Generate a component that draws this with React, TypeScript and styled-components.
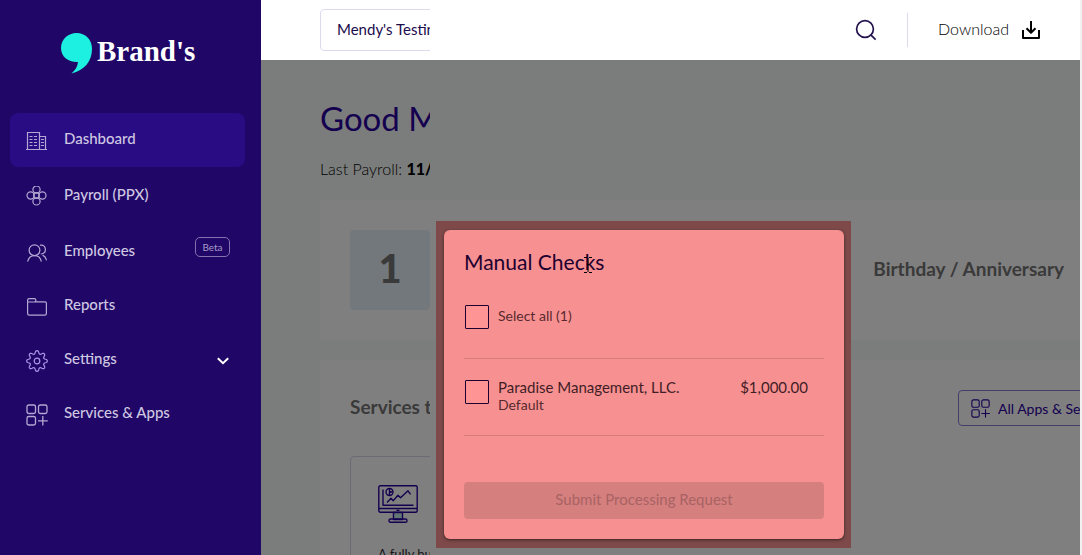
import React from "react";
import styled, { createGlobalStyle } from "styled-components";

const GlobalStyle = createGlobalStyle`
  *, *::before, *::after { box-sizing: border-box; }
  body {
    margin: 0;
    font-family: Lato, "Liberation Sans", sans-serif;
    font-size: 16px;
    background: #f1f1f1;
  }
  h1, h2, h3, p, ul { margin: 0; padding: 0; }
  ul { list-style: none; }
  button, select, input { font: inherit; }
`;

const Shell = styled.div`
  display: flex;
  height: 100vh;
  padding-right: 2px;
`;

const Sidebar = styled.aside`
  flex: 0 0 261px;
  padding: 32px 16px 0 10px;
  background: #200666;
`;

const Logo = styled.a`
  display: flex;
  align-items: flex-start;
  gap: 4px;
  height: 81px;
  padding-left: 51px;
  color: #fff;
  text-decoration: none;
`;

const LogoName = styled.span`
  font-family: "Liberation Serif", serif;
  font-size: 29px;
  font-weight: 700;
  line-height: 38px;
`;

const NavList = styled.ul<{ $gap: number }>`
  display: flex;
  flex-direction: column;
  gap: ${(p) => p.$gap}px;
`;

const NavLink = styled.a<{ $active?: boolean }>`
  display: flex;
  align-items: center;
  gap: 16px;
  height: 54px;
  padding: 2px 15px 0 16px;
  border-radius: 8px;
  background: ${(p) => (p.$active ? "#290b83" : "transparent")};
  color: #cfc8e2;
  text-decoration: none;
  svg { flex: none; }
`;

const NavLabel = styled.span`
  flex: 1;
  padding-bottom: 6px;
  font-size: 15px;
  font-weight: 500;
  line-height: 20px;
`;

const Beta = styled.span`
  align-self: flex-start;
  min-width: 35px;
  margin-top: 10px;
  border: 1px solid #8273b0;
  border-radius: 5px;
  color: #a79cc8;
  font-size: 10px;
  line-height: 18px;
  text-align: center;
`;

const Main = styled.main`
  flex: 1;
  min-width: 0;
  display: flex;
  flex-direction: column;
`;

const Header = styled.header`
  display: flex;
  align-items: center;
  justify-content: space-between;
  flex: 0 0 60px;
  padding: 0 39px 0 59px;
  background: #fff;
`;

const Clip = styled.div<{ $width: number }>`
  flex: none;
  width: ${(p) => p.$width}px;
  overflow: hidden;
  white-space: nowrap;
`;

const CompanySelect = styled.select`
  display: block;
  width: 220px;
  height: 42px;
  padding: 0 16px 2px;
  appearance: none;
  border: 1px solid #dedaee;
  border-radius: 4px;
  background: #fff;
  color: #1b0b4b;
  font-size: 15px;
`;

const Tools = styled.div`
  display: flex;
  align-items: center;
`;

const IconButton = styled.button`
  display: flex;
  align-items: center;
  gap: 12px;
  padding: 0;
  border: 0;
  background: none;
  color: #000;
`;

const ButtonText = styled.span`
  padding-bottom: 2px;
  font-size: 16px;
  font-weight: 300;
  line-height: 20px;
`;

const Separator = styled.span`
  width: 1px;
  height: 34px;
  margin: 0 30px;
  background: #dedaee;
`;

const Content = styled.div`
  position: relative;
  flex: 1;
  min-height: 0;
  overflow: hidden;
  display: flex;
  flex-direction: column;
  padding: 40px 0 0 59px;
  background: #f6faf8;
`;

const Greeting = styled.h1`
  color: #2a00a0;
  font-size: 33px;
  font-weight: 400;
  line-height: 36px;
`;

const LastPayroll = styled.p`
  margin: 23px 0 21px;
  color: #000;
  font-size: 16px;
  font-weight: 300;
  line-height: 20px;
  b { font-weight: 900; }
`;

const Card = styled.section`
  flex: none;
  margin-bottom: 20px;
  padding: 30px 0 30px 30px;
  background: #fff;
`;

const CardRow = styled.div`
  display: flex;
  align-items: center;
  justify-content: space-between;
`;

const CountTile = styled.div`
  width: 80px;
  height: 80px;
  border-radius: 4px;
  background: #e6f0f8;
  color: #747474;
  font-size: 40px;
  font-weight: 900;
  line-height: 76px;
  text-align: center;
`;

const CardTitle = styled.h2`
  padding: 0 16px 2px 0;
  color: #747474;
  font-size: 19px;
  font-weight: 700;
  line-height: 24px;
`;

const AppsButton = styled.button`
  display: flex;
  align-items: center;
  gap: 8px;
  height: 36px;
  padding: 0 12px;
  border: 1px solid #8b7ad0;
  border-radius: 4px;
  background: none;
  color: #2a00a0;
  font-size: 14px;
  white-space: nowrap;
`;

const ServiceTile = styled.article`
  width: 200px;
  margin-top: 30px;
  padding: 28px 27px 40px;
  border: 1px solid #d8d4ea;
  border-radius: 4px;
  color: #333;
  font-size: 13px;
  line-height: 20px;
  svg { display: block; margin-bottom: 21px; }
`;

const Backdrop = styled.div`
  position: absolute;
  inset: 0;
  background: rgba(0, 0, 0, 0.5);
`;

const Highlight = styled.div`
  position: absolute;
  top: 161px;
  left: 175px;
  padding: 9px 7px 9px 8px;
  background: #7d4949;
`;

const Modal = styled.section`
  position: relative;
  width: 400px;
  padding: 20px;
  border-radius: 6px;
  background: #f79191;
  box-shadow: 0 1px 3px rgba(0, 0, 0, 0.5);
  color: #57292f;
`;

const ModalTitle = styled.h2`
  color: #1e0030;
  font-size: 21px;
  font-weight: 400;
  line-height: 24px;
`;

const CheckRow = styled.div<{ $top: number; $bottom: number; $align: string }>`
  display: flex;
  align-items: ${(p) => p.$align};
  padding: ${(p) => p.$top}px 16px ${(p) => p.$bottom}px 1px;
  border-bottom: 1px solid #d57b7b;
`;

const CheckBox = styled.input`
  flex: none;
  appearance: none;
  width: 24px;
  height: 24px;
  margin: 2px 9px 0 0;
  border: 1px solid #1e0030;
  border-radius: 1px;
  background: #ff9494;
`;

const CheckLabel = styled.label`
  flex: 1;
  font-size: 14px;
  line-height: 18px;
`;

const Strong = styled.span`
  display: block;
  color: #421d26;
  font-size: 15px;
`;

const Amount = styled.span`
  color: #421d26;
  font-size: 15px;
  line-height: 18px;
`;

const Submit = styled.button`
  display: block;
  width: 100%;
  height: 37px;
  margin-top: 46px;
  padding: 0 0 4px;
  border: 0;
  border-radius: 4px;
  background: #d67f7f;
  color: #a86363;
  font-size: 15px;
`;

const TextCursor = styled.svg`
  position: absolute;
  top: 26px;
  left: 139px;
`;

const navStroke = { fill: "none", stroke: "#b3a8d3", strokeWidth: 1.2 } as const;

const BuildingIcon = () => (
  <svg width="22" height="20" viewBox="0 0 22 20" {...navStroke}>
    <path d="M1.500 18V1.500h12V18M13.500 5.500h6V18M0 18.500h21" />
    <path d="M3.500 5.500h3M8 5.500h3M3.500 8.500h3M8 8.500h3M3.500 11.500h3M8 11.500h3M3.500 14.500h3M8 14.500h3M15 8.500h3M15 11.500h3M15 14.500h3" />
  </svg>
);

const FlowerIcon = () => (
  <svg width="22" height="22" viewBox="0 1 22 22" {...navStroke}>
    <circle cx="10.500" cy="4.600" r="3.600" />
    <circle cx="4.600" cy="10.500" r="3.600" />
    <circle cx="16.400" cy="10.500" r="3.600" />
    <circle cx="10.500" cy="16.400" r="3.600" />
    <circle cx="10.500" cy="10.500" r="2.800" />
  </svg>
);

const PeopleIcon = () => (
  <svg width="22" height="20" viewBox="0 0 22 20" {...navStroke} strokeLinecap="round">
    <circle cx="8.500" cy="7.200" r="5.400" />
    <path d="M1.800 18.200c.8-3.600 3.200-5.600 6.700-5.600s6 2 6.700 5.600" />
    <path d="M14.400 2.200c3.200-.5 5 1.500 5 4.200 0 2.400-1.500 4.200-4.200 4.600M17 12.400c1.800.7 2.800 2.200 3.400 4.400" />
  </svg>
);

const FolderIcon = () => (
  <svg width="22" height="20" viewBox="0 0 22 20" {...navStroke}>
    <path d="M1.600 5V3.200c0-1 .6-1.600 1.600-1.600h5c1 0 1.700.6 1.700 1.600v.4c0 .8-.6 1.400-1.400 1.400H1.600v11.500c0 1 .7 1.700 1.700 1.700h15.400c1 0 1.700-.7 1.700-1.700V6.200c0-.8-.6-1.400-1.400-1.400H8.500" />
  </svg>
);

/* Outline of an eight-toothed cog with rounded teeth. */
const cogPoints = Array.from({ length: 96 }, (_, i) => {
  const angle = (i / 96) * Math.PI * 2;
  const wave = Math.cos(8 * angle);
  const radius = 8.8 + 1.5 * Math.sign(wave) * Math.pow(Math.abs(wave), 0.6);
  return `${(11 + radius * Math.sin(angle)).toFixed(2)},${(11 - radius * Math.cos(angle)).toFixed(2)}`;
}).join(" ");

const GearIcon = () => (
  <svg width="22" height="22" viewBox="0 0 22 22" {...navStroke} stroke="#ab96ea" strokeLinejoin="round">
    <polygon points={cogPoints} />
    <circle cx="11" cy="11" r="2.800" />
  </svg>
);

const AppsIcon = ({ size = 22, color = "#b3a8d3" }: { size?: number; color?: string }) => (
  <svg width={size} height={size} viewBox="0 0 22 22" fill="none" stroke={color} strokeWidth="1.300">
    <rect x="1" y="1" width="8.500" height="8.500" rx="1.800" />
    <rect x="12.500" y="1" width="8.500" height="8.500" rx="1.800" />
    <rect x="1" y="12.500" width="8.500" height="8.500" rx="1.800" />
    <path d="M16.800 12v9.500M12 16.800h9.800" />
  </svg>
);

const ChevronIcon = () => (
  <svg width="13" height="8" viewBox="0 0 13 8" fill="none" stroke="#fff" strokeWidth="2">
    <path d="M0.800 1.200L6 6.200l5.200-5" />
  </svg>
);

const CommaMark = () => (
  <svg width="32" height="42" viewBox="0 0 32 42" fill="#1df0e0">
    <path d="M15.500 1C24.500 1 31 7.500 31 17c0 12.500-7.500 21-20.500 24.500 4-3.500 6-7 6.500-11.500C7.500 30.500 0 25 0 16 0 7.500 7 1 15.500 1z" />
  </svg>
);

const SearchIcon = () => (
  <svg width="22" height="22" viewBox="0 0 22 22" fill="none" stroke="#24124f" strokeWidth="1.700">
    <circle cx="10" cy="10" r="8.400" />
    <path d="M15.800 15.800l4.800 4.800" />
  </svg>
);

const DownloadIcon = () => (
  <svg width="20" height="20" viewBox="0 0 20 20" fill="none" stroke="#000" strokeWidth="2" strokeLinejoin="round">
    <path d="M2 10v8h16v-8M10 1v11.500M5.500 8.200L10 12.700l4.500-4.500" />
  </svg>
);

const MonitorIcon = () => (
  <svg width="40" height="38" viewBox="0 0 40 38" fill="none" stroke="#2a00a0" strokeWidth="1.400" strokeLinejoin="round">
    <rect x="15.500" y="27.500" width="9" height="7" fill="#c4eee6" />
    <rect x="0.800" y="0.800" width="38.400" height="26.500" rx="1.500" />
    <path d="M1 23.500h38M18.500 25.400h3M5 4.500v15.800h30.500" />
    <circle cx="11.500" cy="7" r="3.500" />
    <path d="M11.500 3.500V7.500l3-1M11.500 7v3.500" />
    <path d="M9 17.500l4-4.200 2.200 2.500 4.800-5.500 2.500 2.500 7.500-7 2.500 3.500" />
    <rect x="11" y="34" width="18" height="3.300" rx="1.600" />
  </svg>
);

type NavEntry = { label: string; icon: React.ReactNode; active?: boolean; extra?: React.ReactNode };

const primaryNav: NavEntry[] = [
  { label: "Dashboard", icon: <BuildingIcon />, active: true },
  { label: "Payroll (PPX)", icon: <FlowerIcon /> },
  { label: "Employees", icon: <PeopleIcon />, extra: <Beta>Beta</Beta> },
];

const secondaryNav: NavEntry[] = [
  { label: "Reports", icon: <FolderIcon /> },
  { label: "Settings", icon: <GearIcon />, extra: <ChevronIcon /> },
  { label: "Services & Apps", icon: <AppsIcon /> },
];

const Nav = ({ entries, gap }: { entries: NavEntry[]; gap: number }) => (
  <NavList $gap={gap}>
    {entries.map((entry) => (
      <li key={entry.label}>
        <NavLink href="#" $active={entry.active}>
          {entry.icon}
          <NavLabel>{entry.label}</NavLabel>
          {entry.extra}
        </NavLink>
      </li>
    ))}
  </NavList>
);

export default function App() {
  return (
    <>
      <GlobalStyle />
      <Shell>
        <Sidebar>
          <Logo href="#">
            <CommaMark />
            <LogoName>Brand's</LogoName>
          </Logo>
          <nav>
            <Nav entries={primaryNav} gap={2} />
            <Nav entries={secondaryNav} gap={0} />
          </nav>
        </Sidebar>
        <Main>
          <Header>
            <Clip $width={110}>
              <CompanySelect aria-label="Company">
                <option>Mendy's Testing</option>
              </CompanySelect>
            </Clip>
            <Tools>
              <IconButton aria-label="Search">
                <SearchIcon />
              </IconButton>
              <Separator />
              <IconButton>
                <ButtonText>Download</ButtonText>
                <DownloadIcon />
              </IconButton>
            </Tools>
          </Header>
          <Content>
            <Clip $width={110}>
              <Greeting>Good Morning</Greeting>
              <LastPayroll>
                Last Payroll: <b>11/15</b>
              </LastPayroll>
            </Clip>
            <Card>
              <CardRow>
                <CountTile>1</CountTile>
                <CardTitle>Birthday / Anniversary</CardTitle>
              </CardRow>
            </Card>
            <Card>
              <CardRow>
                <Clip $width={80}>
                  <CardTitle>Services to</CardTitle>
                </Clip>
                <Clip $width={122}>
                  <AppsButton>
                    <AppsIcon size={19} color="#2a00a0" />
                    All Apps &amp; Services
                  </AppsButton>
                </Clip>
              </CardRow>
              <Clip $width={80}>
                <ServiceTile>
                  <MonitorIcon />
                  A fully built
                </ServiceTile>
              </Clip>
            </Card>
            <Backdrop />
            <Highlight>
              <Modal role="dialog" aria-label="Manual Checks">
                <ModalTitle>Manual Checks</ModalTitle>
                <CheckRow $top={29} $bottom={29} $align="center">
                  <CheckBox type="checkbox" id="select-all" />
                  <CheckLabel htmlFor="select-all">Select all (1)</CheckLabel>
                </CheckRow>
                <CheckRow $top={19} $bottom={21} $align="flex-start">
                  <CheckBox type="checkbox" id="paradise" />
                  <CheckLabel htmlFor="paradise">
                    <Strong>Paradise Management, LLC.</Strong>
                    Default
                  </CheckLabel>
                  <Amount>$1,000.00</Amount>
                </CheckRow>
                <Submit disabled>Submit Processing Request</Submit>
                <TextCursor width="10" height="18" viewBox="0 0 10 18" fill="none" stroke="#000" strokeWidth="1">
                  <path d="M1 1.500h3M6 1.500h3M5 2v14M1 16.500h3M6 16.500h3M4 8.500h2" />
                </TextCursor>
              </Modal>
            </Highlight>
          </Content>
        </Main>
      </Shell>
    </>
  );
}
